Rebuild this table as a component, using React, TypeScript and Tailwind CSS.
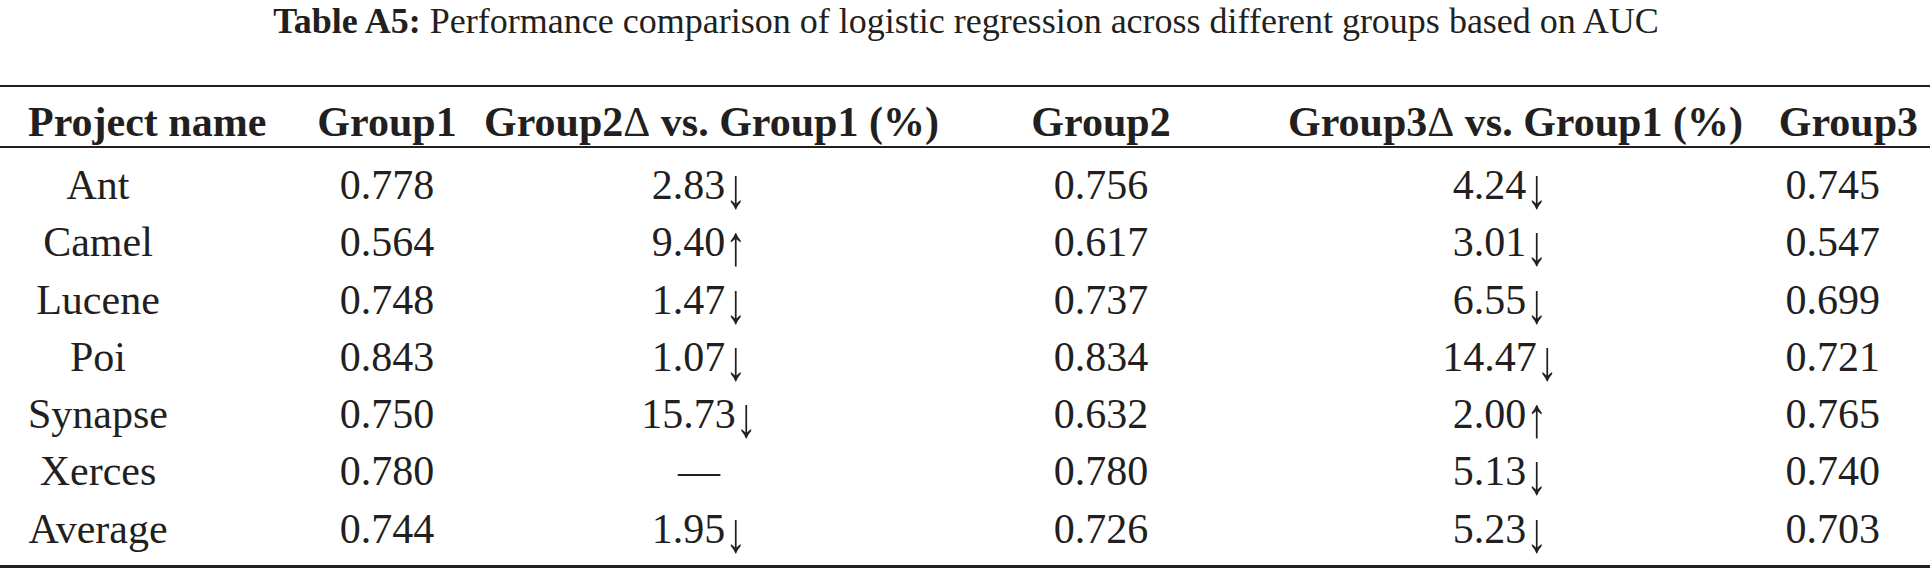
const rows = [
  ["Ant", "0.778", "2.83↓", "0.756", "4.24↓", "0.745"],
  ["Camel", "0.564", "9.40↑", "0.617", "3.01↓", "0.547"],
  ["Lucene", "0.748", "1.47↓", "0.737", "6.55↓", "0.699"],
  ["Poi", "0.843", "1.07↓", "0.834", "14.47↓", "0.721"],
  ["Synapse", "0.750", "15.73↓", "0.632", "2.00↑", "0.765"],
  ["Xerces", "0.780", "—", "0.780", "5.13↓", "0.740"],
  ["Average", "0.744", "1.95↓", "0.726", "5.23↓", "0.703"],
];

function Delta({ v }: { v: string }) {
  const arrow = v.slice(-1);
  if (arrow !== "↓" && arrow !== "↑") return <>{v}</>;
  return (
    <>
      {v.slice(0, -1)}
      <span className="inline-block scale-y-[1.35] translate-y-[4px]">{arrow}</span>
    </>
  );
}

export default function App() {
  return (
    <div className="w-[1932px] h-[571px] bg-white text-[#231f20] overflow-hidden font-['Liberation_Serif']">
      <p className="font-['Liberation_Serif'] text-center text-[36px] leading-[42px] whitespace-nowrap">
        <span className="font-bold">Table A5:</span> Performance comparison of logistic regression across
        different groups based on AUC
      </p>

      <div className="w-[1930px] mt-[43px] border-t-[2px] border-b-[3px] border-[#231f20] text-[42px]">
        <div className="font-['Liberation_Serif'] grid grid-cols-[290px_194px_430px_374px_424px_1fr] pt-[11px] leading-[48px] border-b-[2px] border-[#231f20] font-bold whitespace-nowrap">
          <div className="pl-[28px]">Project name</div>
          <div className="text-center">Group1</div>
          <div className="text-center">
            Group2<span className="font-normal">Δ</span> vs. Group1 (%)
          </div>
          <div className="text-center">Group2</div>
          <div className="text-center">
            Group3<span className="font-normal">Δ</span> vs. Group1 (%)
          </div>
          <div className="text-right pr-[12px]">Group3</div>
        </div>

        <div className="pt-[9px] pb-[7px] leading-[57.3px]">
          {rows.map((r) => (
            <div
              key={r[0]}
              className="font-['Liberation_Serif'] grid grid-cols-[290px_194px_430px_374px_424px_1fr] h-[57.3px] whitespace-nowrap"
            >
              <div className="w-[196px] text-center">{r[0]}</div>
              <div className="text-center">{r[1]}</div>
              <div className="text-center">
                <Delta v={r[2]} />
              </div>
              <div className="text-center">{r[3]}</div>
              <div className="text-center">
                <Delta v={r[4]} />
              </div>
              <div className="text-right pr-[50px]">{r[5]}</div>
            </div>
          ))}
        </div>
      </div>
    </div>
  );
}
